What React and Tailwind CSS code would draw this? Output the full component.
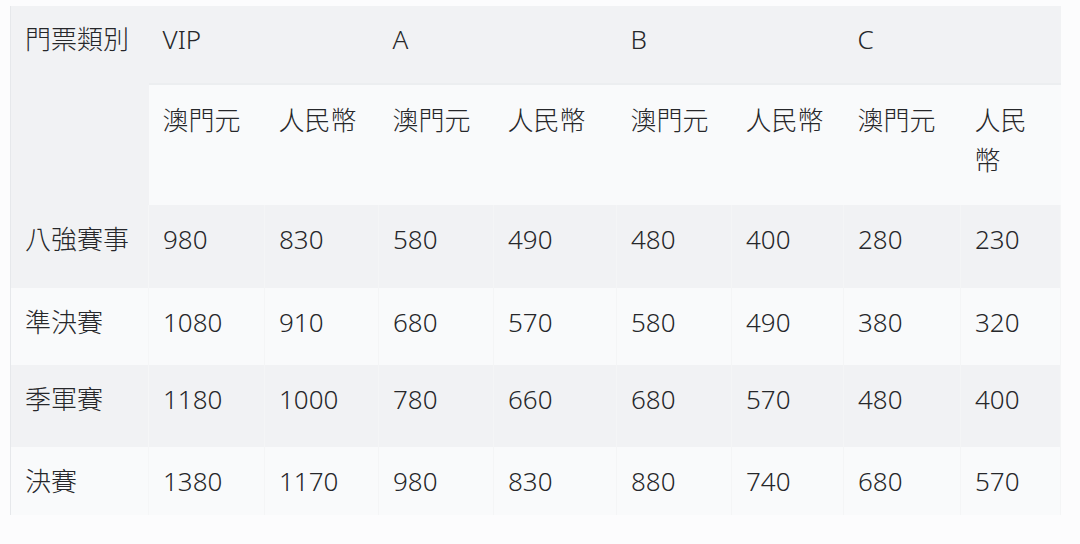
const cols = [138, 116, 114, 115, 123, 115, 112, 117, 100];

const rows = [
  { name: "八強賽事", vals: ["980", "830", "580", "490", "480", "400", "280", "230"], h: "h-[83px]", bg: "bg-[#f1f2f4]" },
  { name: "準決賽", vals: ["1080", "910", "680", "570", "580", "490", "380", "320"], h: "h-[77px]", bg: "bg-[#f9fafb]" },
  { name: "季軍賽", vals: ["1180", "1000", "780", "660", "680", "570", "480", "400"], h: "h-[82px]", bg: "bg-[#f1f2f4]" },
  { name: "決賽", vals: ["1380", "1170", "980", "830", "880", "740", "680", "570"], h: "h-[68px]", bg: "bg-[#f9fafb]" },
];

const currencies = ["澳門元", "人民幣", "澳門元", "人民幣", "澳門元", "人民幣", "澳門元", "人民幣"];

const cell = "align-top pl-[14px] pr-[14px] text-left font-light";

export default function App() {
  return (
    <div
      className="w-[1080px] h-[544px] bg-[#fcfcfd] pt-[6px] pl-[10px] text-[#26272a] text-[26px] leading-[40px]"
      style={{ fontFamily: '"Noto Sans", "Noto Sans CJK TC", sans-serif' }}
    >
      <table className="table-fixed border-collapse w-[1050px] border-l border-[#e6e8eb]">
        <colgroup>
          {cols.map((w, i) => (
            <col key={i} style={{ width: w }} />
          ))}
        </colgroup>
        <thead>
          <tr className="h-[78px] bg-[#f1f2f4]">
            <th rowSpan={2} className={`${cell} pt-[13px] bg-[#f1f2f4]`}>門票類別</th>
            <th colSpan={2} className={`${cell} pt-[13px]`}>VIP</th>
            <th colSpan={2} className={`${cell} pt-[13px]`}>A</th>
            <th colSpan={2} className={`${cell} pt-[13px]`}>B</th>
            <th colSpan={2} className={`${cell} pt-[13px]`}>C</th>
          </tr>
          <tr className="h-[121px] bg-[#f9fafb]">
            {currencies.map((c, i) => (
              <th key={i} className={`${cell} pt-[15px] border-t-2 border-[#eceef0]`}>{c}</th>
            ))}
          </tr>
        </thead>
        <tbody>
          {rows.map((r) => (
            <tr key={r.name} className={`${r.h} ${r.bg}`}>
              <td className={`${cell} pt-[14px] border-r border-[#f5f6f7]`}>{r.name}</td>
              {r.vals.map((v, i) => (
                <td key={i} className={`${cell} pt-[14px] border-r border-[#f4f5f6]`}>{v}</td>
              ))}
            </tr>
          ))}
        </tbody>
      </table>
    </div>
  );
}
